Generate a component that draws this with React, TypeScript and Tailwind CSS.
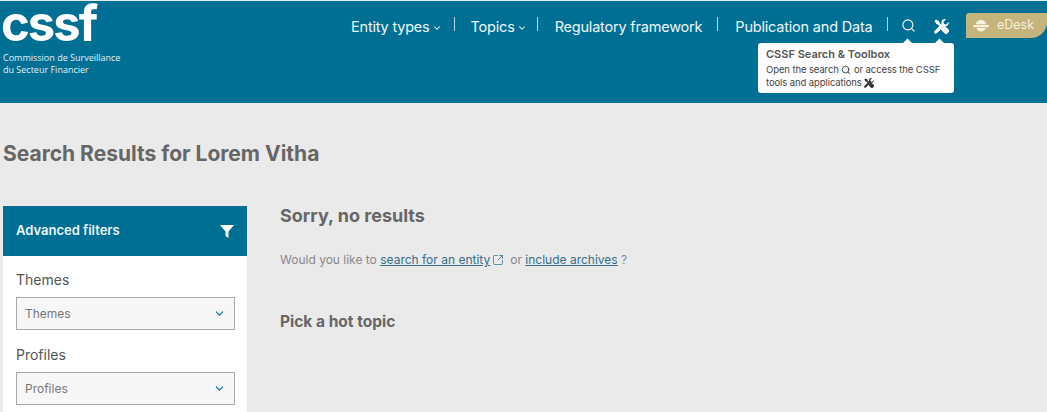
import React from 'react';
import { ChevronDown, Search, SquareArrowOutUpRight } from 'lucide-react';

const font = { fontFamily: 'Inter, "Open Sans", sans-serif' };

const Tools = ({ className }: { className: string }) => (
  <svg viewBox="0 0 16 16" className={className} fill="currentColor">
    <path d="M.6 2.200 2.200.6l3.200 1.900.4 1.600 3 3-1.700 1.700-3-3-1.600-.4z" />
    <path d="M9.800 8.400 11.200 7l4.300 4.300c.8.800.8 1.900 0 2.700l-1.400 1.400c-.8.800-1.900.8-2.700 0L7.100 11.100z" />
    <path d="M15.700 3.200 13 5.900l-2.400-.5-.5-2.400L12.800.3C10.900-.3 8.800.7 8.100 2.600c-.3.800-.3 1.700 0 2.500l-7.500 7.600c-.7.700-.7 1.800 0 2.500s1.800.7 2.500 0l7.500-7.600c.8.300 1.700.3 2.500 0 1.900-.7 3-2.500 2.600-4.400z" />
  </svg>
);

const NavItem = ({ label, caret }: { label: string; caret?: boolean }) => (
  <div className="flex items-center gap-[2px] text-[14.5px] leading-5 text-[#eef6f9] whitespace-nowrap tracking-[-0.2px]">
    <span>{label}</span>
    {caret && <ChevronDown className="h-[10px] w-[10px] mt-[2px]" strokeWidth={2.5} />}
  </div>
);

const Divider = () => <div className="w-px h-[14px] bg-[#b7d3de] -mt-[6px]" />;

const SelectBox = ({ label }: { label: string }) => (
  <div>
    <div className="text-[14px] leading-5 text-[#555] mb-[7px]">{label}</div>
    <div className="h-[33px] flex items-center justify-between pl-[8px] pr-[8px] border border-[#a8a8a8] bg-[#f7f7f7] text-[12px] text-[#777]">
      <span>{label}</span>
      <ChevronDown className="h-[13px] w-[13px] text-[#006f94]" strokeWidth={2} />
    </div>
  </div>
);

const App = () => {
  return (
    <div className="w-[1047px] h-[412px] overflow-hidden bg-[#eaeaea]" style={font}>
      <header className="relative h-[103px] bg-[#006f94] border-t border-[#e4eef2] flex">
        <div className="w-[340px] pl-[1px] shrink-0">
          <div className="h-[46px] text-[49px] leading-[46px] font-bold text-white tracking-[-2px] whitespace-nowrap">cssf</div>
          <div className="mt-[5px] pl-[2px] text-[9px] leading-[12px] text-[#e6f0f4] whitespace-nowrap" style={{ fontFamily: '"Open Sans", sans-serif' }}>
            Commission de Surveillance
            <br />
            du Secteur Financier
          </div>
        </div>
        <nav className="flex items-center h-[51px] pl-[11px]">
          <NavItem label="Entity types" caret />
          <div className="ml-[12px] mr-[16px]"><Divider /></div>
          <NavItem label="Topics" caret />
          <div className="ml-[10px] mr-[17px]"><Divider /></div>
          <NavItem label="Regulatory framework" />
          <div className="ml-[15px] mr-[17px]"><Divider /></div>
          <NavItem label="Publication and Data" />
          <div className="ml-[15px] mr-[13px]"><Divider /></div>
          <Search className="h-[15px] w-[15px] text-white -mt-[2px]" strokeWidth={1.75} />
          <Tools className="ml-[18px] h-[15px] w-[15px] text-white -mt-[1px]" />
        </nav>
        <div className="ml-auto mt-[12px] h-[25px] w-[81px] bg-[#c6b47d] rounded-tl-[3px] rounded-br-[16px] flex items-center pl-[7px] gap-[8px] text-[12.5px] text-[#f4efdf]">
          <svg viewBox="0 0 16 14" className="h-[14px] w-[16px]" fill="currentColor">
            <path d="M3 5.200C3 2.800 5.200 1 8 1s5 1.800 5 4.200z" />
            <rect x="0" y="6" width="16" height="2.200" rx="1.100" />
            <path d="M3.500 9h9C12.200 11 10.400 12.400 8 12.400S3.800 11 3.500 9z" />
          </svg>
          <span>eDesk</span>
        </div>

        {/* tooltip under search + tools */}
        <div className="absolute left-[758px] top-[42px] w-[196px] h-[50px] bg-white rounded-[3px] px-[8px] pt-[4px] text-[#444]">
          <div className="absolute left-[146px] -top-[3px] h-[7px] w-[7px] rotate-45 bg-white" />
          <div className="absolute left-[178px] -top-[3px] h-[7px] w-[7px] rotate-45 bg-white" />
          <div className="text-[11px] leading-[14px] font-semibold text-[#555] whitespace-nowrap">CSSF Search &amp; Toolbox</div>
          <div className="mt-[2px] text-[9.5px] leading-[13px] whitespace-nowrap tracking-[-0.1px]">
            Open the search <Search className="inline h-[10px] w-[10px] -mt-[1px]" strokeWidth={2.25} /> or access the CSSF
            <br />
            tools and applications <Tools className="inline h-[10px] w-[10px] text-[#333]" />
          </div>
        </div>
      </header>

      <main className="px-[3px]">
        <h1 className="pt-[39px] text-[21px] leading-[24px] font-bold text-[#666]">Search Results for Lorem Vitha</h1>
        <div className="mt-[40px] flex items-start">
          <aside className="w-[244px] shrink-0 bg-white h-[206px]">
            <div className="h-[50px] bg-[#006f94] flex items-center justify-between pl-[13px] pr-[13px] text-white">
              <span className="text-[13px] font-semibold text-[#eef6f9]">Advanced filters</span>
              <svg viewBox="0 0 14 13" className="h-[13px] w-[14px]" fill="currentColor">
                <path d="M0 0h14L8.500 6.500V13l-3-2V6.500z" />
              </svg>
            </div>
            <div className="px-[13px] pt-[14px] pr-[12px] flex flex-col gap-[15px]">
              <SelectBox label="Themes" />
              <SelectBox label="Profiles" />
            </div>
          </aside>
          <section className="pl-[33px]">
            <h2 className="text-[18px] leading-5 font-bold text-[#666]">Sorry, no results</h2>
            <p className="mt-[26px] text-[12px] leading-4 text-[#888] whitespace-nowrap">
              Would you like to{' '}
              <a className="text-[#33708a] underline">search for an entity</a>
              <SquareArrowOutUpRight className="inline h-[12px] w-[12px] ml-[2px] -mt-[2px] text-[#33708a]" strokeWidth={1.5} />
              <span className="ml-[6px]">or </span>
              <a className="text-[#33708a] underline">include archives</a> ?
            </p>
            <h3 className="mt-[44px] text-[15.5px] leading-5 font-bold text-[#666]">Pick a hot topic</h3>
          </section>
        </div>
      </main>
    </div>
  );
};

export default App;
